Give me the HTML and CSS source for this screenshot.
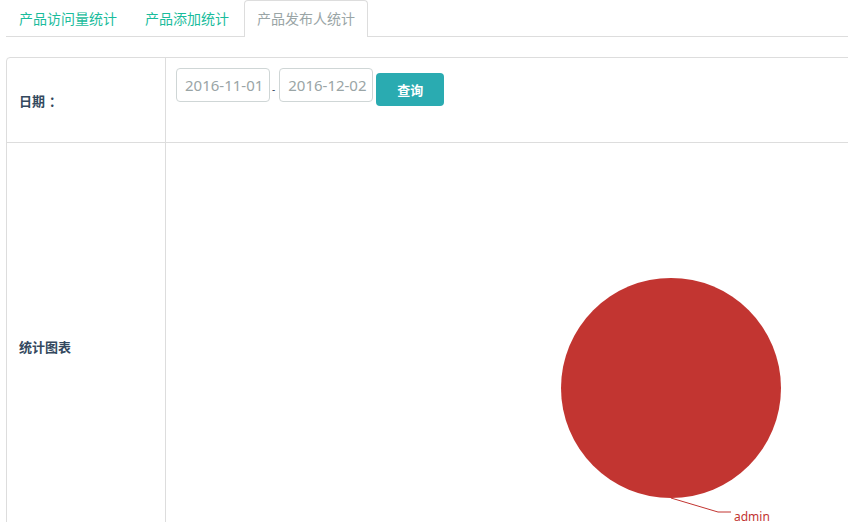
FILE: index.html
```html
<!DOCTYPE html>
<html lang="zh">
<head>
<meta charset="utf-8">
<title>产品发布人统计</title>
<link rel="stylesheet" href="styles.css">
</head>
<body>
<div class="page">
  <ul class="tabs">
    <li class="tab"><a>产品访问量统计</a></li>
    <li class="tab"><a>产品添加统计</a></li>
    <li class="tab active"><a>产品发布人统计</a></li>
  </ul>
  <div class="table">
    <div class="row row-date">
      <div class="label">日期<span class="colon">：</span></div>
      <div class="cell">
        <div class="form">
          <input class="date" type="text" value="2016-11-01">
          <span class="dash">-</span>
          <input class="date" type="text" value="2016-12-02">
          <button class="btn" type="button">查询</button>
        </div>
      </div>
    </div>
    <div class="row row-chart">
      <div class="label">统计图表</div>
      <div class="cell">
        <svg class="chart" width="660" height="392" viewBox="0 0 660 392">
          <circle cx="495" cy="235" r="110" fill="#c23531"/>
          <polyline points="495,345 542,359 555,359" fill="none" stroke="#c23531" stroke-width="1"/>
          <text x="558" y="368" class="chart-label">admin</text>
        </svg>
      </div>
    </div>
  </div>
</div>
</body>
</html>
```
FILE: styles.css
```css
html, body {
  margin: 0;
  padding: 0;
  overflow: hidden;
  background: #fff;
}
body {
  font-family: "Noto Sans", "Noto Sans CJK SC", sans-serif;
  font-size: 14px;
  color: #34495e;
}
.page {
  padding-left: 6px;
  width: 860px;
}
.tabs {
  list-style: none;
  margin: 0;
  padding: 0;
  display: flex;
  border-bottom: 1px solid #dddddd;
  height: 36px;
}
.tab {
  margin-right: 2px;
}
.tab a {
  display: block;
  height: 36px;
  line-height: 36px;
  padding: 0 12px;
  font-size: 14px;
  color: #1abc9c;
  border: 1px solid transparent;
  border-bottom: none;
  border-radius: 4px 4px 0 0;
  box-sizing: border-box;
}
.tab.active a {
  color: #9aa5a6;
  border-color: #dddddd;
  background: #fff;
  height: 37px;
}
.table {
  margin-top: 20px;
  border: 1px solid #dddddd;
  border-radius: 4px;
  display: flex;
  flex-direction: column;
}
.row {
  display: flex;
}
.row + .row {
  border-top: 1px solid #dddddd;
}
.row-date {
  height: 84px;
}
.label {
  width: 146px;
  flex: none;
  padding-left: 12px;
  border-right: 1px solid #dddddd;
  display: flex;
  align-items: center;
  font-family: "Noto Sans CJK SC", sans-serif;
  font-size: 13px;
  font-weight: bold;
  color: #34495e;
}
.colon {
  padding-left: 4px;
}
.cell {
  flex: 1;
  padding: 10px;
}
.form {
  display: flex;
  align-items: flex-start;
}
.date {
  width: 94px;
  height: 34px;
  box-sizing: border-box;
  border: 1px solid #cfd6d6;
  border-radius: 4px;
  padding: 0 0 0 8px;
  font-family: "Noto Sans", sans-serif;
  font-size: 15px;
  color: #9aa5a6;
  outline: none;
}
.dash {
  font-size: 10px;
  line-height: 1;
  color: #34495e;
  margin: 16px 4px 0 2px;
}
.btn {
  margin: 5px 0 0 3px;
  width: 68px;
  height: 33px;
  border: none;
  border-radius: 4px;
  background: #2aabb1;
  color: #fff;
  font-family: "Noto Sans CJK SC", sans-serif;
  font-size: 13px;
  font-weight: bold;
}
.row-chart {
  height: 406px;
}
.chart {
  display: block;
  overflow: visible;
}
.chart-label {
  font-family: "Noto Sans", "Noto Sans CJK SC", sans-serif;
  font-size: 12px;
  fill: #c23531;
}
```
